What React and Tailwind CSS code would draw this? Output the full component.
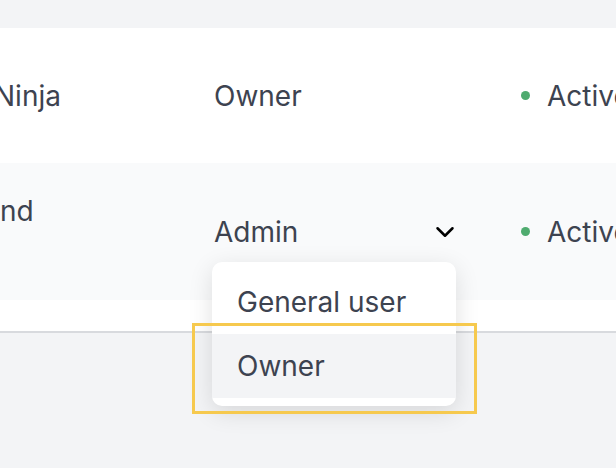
import { ChevronDown } from 'lucide-react';

function StatusCell() {
    return (
        <div className="flex shrink-0 items-center gap-[17px]">
            <span className="h-[9px] w-[9px] rounded-full bg-[#4fab6f]" />
            <span>Active</span>
        </div>
    );
}

export default function App() {
    return (
        <div
            className="relative h-[468px] w-[616px] overflow-hidden bg-[#f3f4f6] pt-[28px] text-[28px] leading-[34px] text-[#3d4350]"
            style={{ fontFamily: 'Inter, "Noto Sans", sans-serif' }}
        >
            {/* Tabela */}
            <div className="border-b-2 border-[#d8dade] bg-white">
                <div className="flex h-[135px] items-center whitespace-nowrap">
                    <div className="-ml-[6px] w-[220px] shrink-0">Ninja</div>
                    <div className="w-[307px] shrink-0">Owner</div>
                    <StatusCell />
                </div>
                <div className="relative flex h-[137px] items-center whitespace-nowrap bg-[#f9fafb]">
                    <div className="w-[214px] shrink-0 self-start pt-[31px]">nd</div>
                    <div className="relative w-[307px] shrink-0">
                        <div className="flex w-[244px] items-center justify-between">
                            <span>Admin</span>
                            <ChevronDown className="mr-[-2px] h-[30px] w-[30px] text-black" strokeWidth={2} />
                        </div>
                        {/* Menu */}
                        <div className="absolute left-[-2px] top-[47px] z-10 w-[244px] rounded-[10px] bg-white py-2 shadow-[0_6px_24px_rgba(0,0,0,0.12)]">
                            <div className="flex h-[64px] items-center px-[25px]">General user</div>
                            <div className="flex h-[64px] items-center bg-[#f3f4f6] px-[25px]">Owner</div>
                        </div>
                    </div>
                    <StatusCell />
                </div>
                <div className="h-[31px]" />
            </div>

            {/* Podświetlenie */}
            <div className="pointer-events-none absolute left-[192px] top-[323px] z-20 h-[91px] w-[285px] border-[3px] border-[#f6c94e]" />
        </div>
    );
}
